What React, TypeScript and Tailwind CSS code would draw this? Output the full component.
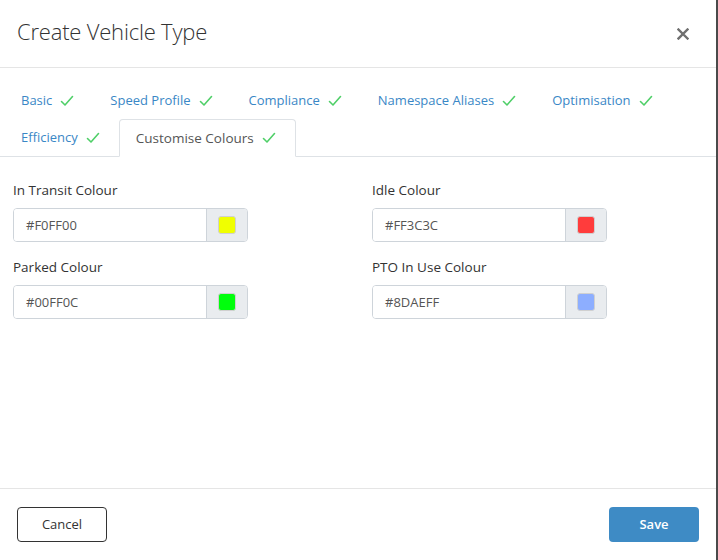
import React from "react";

const Check = () => (
  <svg width="14" height="12" viewBox="0 0 14 12" className="ml-[8px] shrink-0">
    <polyline points="1.5,6.5 5,10 12.5,1.5" fill="none" stroke="#4fcf68" strokeWidth="1.6" strokeLinecap="round" strokeLinejoin="round" />
  </svg>
);

const Tab = ({ label, active = false }: { label: string; active?: boolean }) => (
  <div
    className={
      active
        ? "flex items-center h-[38px] pl-[16px] pr-[19px] mr-[2px] -mb-px bg-white border border-[#dee2e6] border-b-white rounded-t-[4px] text-[13.5px] text-[#555]"
        : "flex items-center h-[37px] px-[16px] mr-[2px] border border-transparent text-[#3a87c6]"
    }
  >
    <span>{label}</span>
    <Check />
  </div>
);

const ColourField = ({ label, value, colour }: { label: string; value: string; colour: string }) => (
  <div className="flex flex-col">
    <div className="h-[20px] leading-[20px] text-[13.5px] text-[#333] mb-[8px]">{label}</div>
    <div className="flex w-[235px] h-[34px] border border-[#ced4da] rounded-[4px] overflow-hidden">
      <div className="flex-1 flex items-center pl-[12px] pt-[2px] text-[13px] text-[#555] bg-white">{value}</div>
      <div className="w-[41px] flex items-center justify-center bg-[#e9ecef] border-l border-[#ced4da]">
        <div className="w-[18px] h-[18px] rounded-[3px] border border-[#d0d0d0]" style={{ backgroundColor: colour }} />
      </div>
    </div>
  </div>
);

export default function App() {
  return (
    <div className="w-[718px] h-[560px] flex bg-white" style={{ fontFamily: '"Open Sans", "Noto Sans", sans-serif' }}>
      <div className="w-[716px] h-[560px] flex flex-col bg-white">
        <div className="h-[68px] shrink-0 flex items-center justify-between pl-[17px] pr-[27px] border-b border-[#e5e5e5]">
          <div className="text-[22px] font-light text-[#333] tracking-[-0.2px] pb-[5px]">Create Vehicle Type</div>
          <svg width="12" height="12" viewBox="0 0 12 12">
            <path d="M1.5 1.5 L10.5 10.5 M10.5 1.5 L1.5 10.5" stroke="#6f6f6f" strokeWidth="2.4" strokeLinecap="square" />
          </svg>
        </div>
        <div className="shrink-0 pt-[14px] px-[4px] border-b border-[#dee2e6] text-[13px]">
          <div className="flex">
            <Tab label="Basic" />
            <Tab label="Speed Profile" />
            <Tab label="Compliance" />
            <Tab label="Namespace Aliases" />
            <Tab label="Optimisation" />
          </div>
          <div className="flex">
            <Tab label="Efficiency" />
            <Tab label="Customise Colours" active />
          </div>
        </div>
        <div className="flex-1 pt-[23px] px-[13px]">
          <div className="grid grid-cols-2 gap-x-[28px] gap-y-[15px]">
            <ColourField label="In Transit Colour" value="#F0FF00" colour="#F0FF00" />
            <ColourField label="Idle Colour" value="#FF3C3C" colour="#FF3C3C" />
            <ColourField label="Parked Colour" value="#00FF0C" colour="#00FF0C" />
            <ColourField label="PTO In Use Colour" value="#8DAEFF" colour="#8DAEFF" />
          </div>
        </div>
        <div className="h-[72px] shrink-0 border-t border-[#e5e5e5] flex items-start justify-between pt-[18px] px-[17px]">
          <button className="w-[90px] h-[35px] border border-[#333] rounded-[4px] bg-white text-[13px] text-[#333]">Cancel</button>
          <button className="w-[90px] h-[35px] rounded-[4px] bg-[#3e8bc5] text-[13px] font-semibold text-white">Save</button>
        </div>
      </div>
      <div className="w-[2px] h-[560px] bg-[#4a4a4a]" />
    </div>
  );
}
